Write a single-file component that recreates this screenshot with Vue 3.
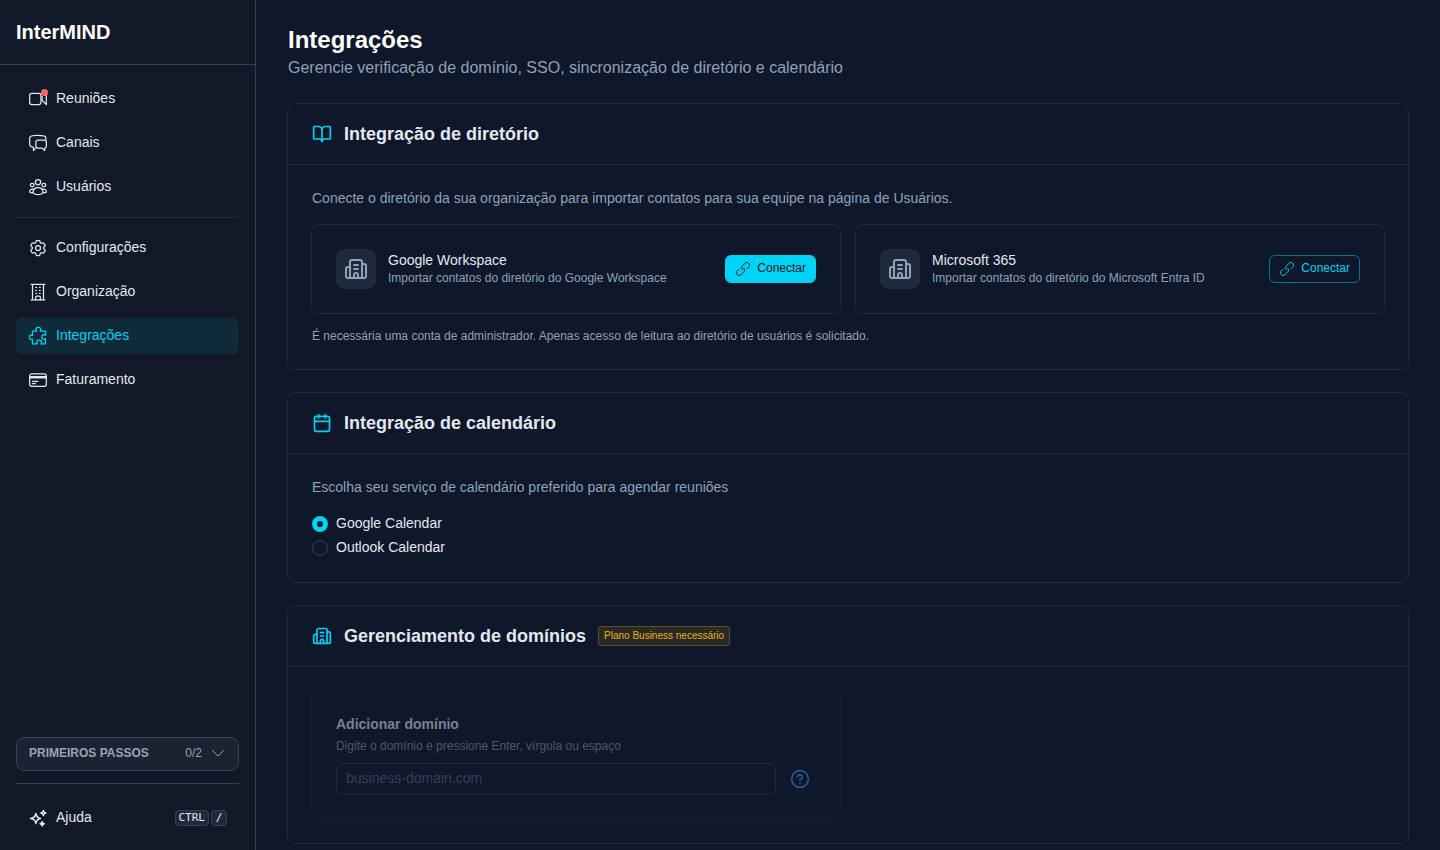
<template>
  <div class="layout">
    <aside class="sidebar">
      <div class="brand">InterMIND</div>
      <nav class="menu">
        <template v-for="(group, i) in menuGroups" :key="i">
          <hr v-if="i > 0" class="menu-divider">
          <a
            v-for="item in group"
            :key="item.id"
            href="#"
            class="menu-item"
            :class="{ active: item.id === current }"
            @click.prevent="current = item.id">
            <span class="menu-icon">
              <svg viewBox="0 0 24 24" width="20" height="20">
                <path v-for="d in item.paths" :key="d" :d="d" />
              </svg>
              <span v-if="item.badge" class="dot"></span>
            </span>
            <span class="menu-label">{{ item.label }}</span>
          </a>
        </template>
      </nav>

      <div class="sidebar-bottom">
        <button type="button" class="steps">
          <span class="steps-title">PRIMEIROS PASSOS</span>
          <span class="steps-count">0/2</span>
          <svg viewBox="0 0 16 16" width="16" height="16"><path d="M2.5 5.5 8 11l5.5-5.5" /></svg>
        </button>
        <hr class="bottom-divider">
        <a href="#" class="menu-item help-item" @click.prevent>
          <span class="menu-icon">
            <svg viewBox="0 0 24 24" width="20" height="20" class="sparkles">
              <path d="M9.500 6.500C10 10.500 11.500 12 15 12.500C11.500 13 10 14.500 9.500 18.500C9 14.500 7.500 13 3 12.500C7.500 12 9 10.500 9.500 6.500Z" />
              <path d="M18.500 3C18.800 5 19.500 5.700 21.500 6C19.500 6.300 18.800 7 18.500 9C18.200 7 17.500 6.300 15.500 6C17.500 5.700 18.200 5 18.500 3Z" />
              <path d="M17 16.500C17.300 18.200 17.900 18.800 19.500 19C17.900 19.200 17.300 19.800 17 21.500C16.700 19.800 16.100 19.200 14.500 19C16.100 18.800 16.700 18.200 17 16.500Z" />
            </svg>
          </span>
          <span class="menu-label">Ajuda</span>
          <span class="keys"><kbd>CTRL</kbd><kbd>/</kbd></span>
        </a>
      </div>
    </aside>

    <main class="content">
      <header class="page-header">
        <h1>Integrações</h1>
        <p>Gerencie verificação de domínio, SSO, sincronização de diretório e calendário</p>
      </header>

      <!-- Diretório -->
      <section class="card">
        <div class="card-header">
          <svg viewBox="0 0 24 24" width="20" height="20">
            <path d="M12 7v14" />
            <path d="M3 18a1 1 0 0 1-1-1V4a1 1 0 0 1 1-1h5a4 4 0 0 1 4 4 4 4 0 0 1 4-4h5a1 1 0 0 1 1 1v13a1 1 0 0 1-1 1h-6a3 3 0 0 0-3 3 3 3 0 0 0-3-3z" />
          </svg>
          <h2>Integração de diretório</h2>
        </div>
        <div class="card-body">
          <p class="lead">Conecte o diretório da sua organização para importar contatos para sua equipe na página de Usuários.</p>
          <div class="grid">
            <div v-for="p in providers" :key="p.name" class="box provider">
              <span class="provider-icon">
                <svg viewBox="0 0 24 24" width="24" height="24">
                  <path v-for="d in buildingPaths" :key="d" :d="d" />
                </svg>
              </span>
              <div class="provider-text">
                <h3>{{ p.name }}</h3>
                <p>{{ p.description }}</p>
              </div>
              <button type="button" class="connect" :class="{ outline: p.outline }">
                <svg viewBox="0 0 24 24" width="16" height="16">
                  <path d="M13.200 10.800a4 4 0 0 1 0 5.600l-4.600 4.600a4 4 0 0 1-5.600-5.600l3-3" />
                  <path d="M10.800 13.200a4 4 0 0 1 0-5.600l4.600-4.600a4 4 0 0 1 5.600 5.600l-3 3" />
                </svg>
                <span>Conectar</span>
              </button>
            </div>
          </div>
          <p class="note">É necessária uma conta de administrador. Apenas acesso de leitura ao diretório de usuários é solicitado.</p>
        </div>
      </section>

      <!-- Calendário -->
      <section class="card">
        <div class="card-header">
          <svg viewBox="0 0 24 24" width="20" height="20">
            <path d="M8 2v4M16 2v4M3 10h18" />
            <rect x="3" y="4" width="18" height="18" rx="2" />
          </svg>
          <h2>Integração de calendário</h2>
        </div>
        <div class="card-body">
          <p class="lead">Escolha seu serviço de calendário preferido para agendar reuniões</p>
          <div class="radios">
            <label v-for="c in calendars" :key="c.id" class="radio">
              <input v-model="calendar" type="radio" name="calendar" :value="c.id">
              <span>{{ c.label }}</span>
            </label>
          </div>
        </div>
      </section>

      <!-- Domínios -->
      <section class="card">
        <div class="card-header">
          <svg viewBox="0 0 24 24" width="20" height="20">
            <path v-for="d in buildingPaths" :key="d" :d="d" />
          </svg>
          <h2>Gerenciamento de domínios</h2>
          <span class="badge">Plano Business necessário</span>
        </div>
        <div class="card-body">
          <div class="grid">
            <div class="box domain">
              <label for="domain">Adicionar domínio</label>
              <p>Digite o domínio e pressione Enter, vírgula ou espaço</p>
              <div class="domain-row">
                <input id="domain" v-model="domain" type="text" placeholder="business-domain.com" disabled>
                <button type="button" class="help" aria-label="Ajuda" disabled>
                  <svg viewBox="0 0 24 24" width="20" height="20">
                    <circle cx="12" cy="12" r="10" />
                    <path d="M9.090 9a3 3 0 0 1 5.830 1c0 2-3 3-3 3M12 17h.01" />
                  </svg>
                </button>
              </div>
            </div>
          </div>
        </div>
      </section>
    </main>
  </div>
</template>

<script setup>
import { ref } from 'vue';

const current = ref('integracoes');
const calendar = ref('google');
const domain = ref('');

const menuGroups = [
  [
    {
      id: 'reunioes',
      label: 'Reuniões',
      badge: true,
      paths: [
        'M4.500 5.300h8.500a2.500 2.500 0 0 1 2.500 2.500v8.500a2.500 2.500 0 0 1-2.500 2.500H4.500a2.500 2.500 0 0 1-2.500-2.500v-8.500A2.500 2.500 0 0 1 4.500 5.300z',
        'M17 9v4.500l5 5.200V7',
      ],
    },
    {
      id: 'canais',
      label: 'Canais',
      paths: [
        'M21.500 8V6.500a3 3 0 0 0-2.600-3C14.500 2.600 9.500 2.600 5 3.300a3.500 3.500 0 0 0-3 3.400v6.600A3.500 3.500 0 0 0 5.200 16.800h1.300V21L9 18.500',
        'M12 8.500h7.500a2.500 2.500 0 0 1 2.500 2.500v5a2.500 2.500 0 0 1-2 2.400V21l-3-2.800h-5a2.500 2.500 0 0 1-2.500-2.500V11a2.500 2.500 0 0 1 2.500-2.500z',
      ],
    },
    {
      id: 'usuarios',
      label: 'Usuários',
      paths: [
        'M12 3a3 3 0 1 1 0 6.400A3 3 0 0 1 12 3z',
        'M5 7.500a2.200 2.200 0 1 1 0 4.400 2.200 2.200 0 0 1 0-4.400zM19 7.500a2.200 2.200 0 1 1 0 4.400 2.200 2.200 0 0 1 0-4.400z',
        'M6 19c0-4 2.500-6.200 6-6.200s6 2.200 6 6.200c-3 3-9 3-12 0z',
        'M7 14.800c-2.800-1-5 .7-5 3.200 1 .9 2.700 1.100 4 .8M17 14.800c2.800-1 5 .7 5 3.200-1 .9-2.700 1.100-4 .8',
      ],
    },
  ],
  [
    {
      id: 'configuracoes',
      label: 'Configurações',
      paths: [
        'M9.594 3.940c.09-.542.56-.94 1.110-.94h2.593c.55 0 1.020.398 1.110.94l.213 1.281c.063.374.313.686.645.870.074.04.147.083.22.127.325.196.72.257 1.075.124l1.217-.456a1.125 1.125 0 0 1 1.370.49l1.296 2.247a1.125 1.125 0 0 1-.26 1.431l-1.003.827c-.293.241-.438.613-.43.992a7.723 7.723 0 0 1 0 .255c-.008.378.137.750.430.991l1.004.827c.424.350.534.955.260 1.430l-1.298 2.247a1.125 1.125 0 0 1-1.369.491l-1.217-.456c-.355-.133-.750-.072-1.076.124a6.470 6.470 0 0 1-.220.128c-.331.183-.581.495-.644.869l-.213 1.281c-.09.543-.560.940-1.110.940h-2.594c-.550 0-1.019-.398-1.110-.940l-.213-1.281c-.062-.374-.312-.686-.644-.870a6.520 6.520 0 0 1-.220-.127c-.325-.196-.720-.257-1.076-.124l-1.217.456a1.125 1.125 0 0 1-1.369-.490l-1.297-2.247a1.125 1.125 0 0 1 .260-1.431l1.004-.827c.292-.240.437-.613.430-.991a6.932 6.932 0 0 1 0-.255c.007-.380-.138-.751-.430-.992l-1.004-.827a1.125 1.125 0 0 1-.260-1.430l1.297-2.247a1.125 1.125 0 0 1 1.370-.491l1.216.456c.356.133.751.072 1.076-.124.072-.044.146-.086.220-.128.332-.183.582-.495.644-.869l.214-1.280z',
        'M15 12a3 3 0 1 1-6 0 3 3 0 0 1 6 0z',
      ],
    },
    {
      id: 'organizacao',
      label: 'Organização',
      paths: [
        'M3.800 2.800h16.400M3.800 21.300h16.400M5.400 2.800v18.500M18.600 2.800v18.500',
        'M9.300 6.500h1M13.700 6.500h1M9.300 10h1M13.700 10h1M9.300 13.500h1M13.700 13.500h1',
        'M9.200 21.300v-3a1.500 1.500 0 0 1 1.500-1.500h2.600a1.500 1.500 0 0 1 1.500 1.500v3',
      ],
    },
    {
      id: 'integracoes',
      label: 'Integrações',
      paths: [
        'M5.300 6h5C9.600 5.100 9.400 4.600 9.400 4.100a3 2.500 0 0 1 6 0c0 .5-.2 1-.9 1.900h6.500v5.300c-.9-.7-1.400-.9-1.900-.9a2.500 2.800 0 0 0 0 5.600c.5 0 1-.2 1.900-.9v6.200h-5.500c.7-.9.9-1.400.9-1.900a3 2.500 0 0 0-6 0c0 .5.2 1 .9 1.900H5.300v-5.600c-.5.400-.9.500-1.300.5a2.300 2.700 0 0 1 0-5.400c.4 0 .8.100 1.300.5z',
      ],
    },
    {
      id: 'faturamento',
      label: 'Faturamento',
      paths: [
        'M4.500 4.500h15a2.500 2.500 0 0 1 2.500 2.500v10a2.500 2.500 0 0 1-2.500 2.500h-15a2.500 2.500 0 0 1-2.500-2.500v-10a2.500 2.500 0 0 1 2.500-2.500z',
        'M2 8h20M2 9.500h20M5.300 13.500h6.500M5.300 16.200h3.500',
      ],
    },
  ],
];

const buildingPaths = [
  'M10 12h4M10 8h4',
  'M14 21v-3a2 2 0 0 0-4 0v3',
  'M6 10H4a2 2 0 0 0-2 2v7a2 2 0 0 0 2 2h16a2 2 0 0 0 2-2V9a2 2 0 0 0-2-2h-2',
  'M6 21V5a2 2 0 0 1 2-2h8a2 2 0 0 1 2 2v16',
];

const providers = [
  { name: 'Google Workspace', description: 'Importar contatos do diretório do Google Workspace', outline: false },
  { name: 'Microsoft 365', description: 'Importar contatos do diretório do Microsoft Entra ID', outline: true },
];

const calendars = [
  { id: 'google', label: 'Google Calendar' },
  { id: 'outlook', label: 'Outlook Calendar' },
];
</script>

<style>
body {
  margin: 0;
  background: #0f172a;
}
</style>

<style scoped>
.layout {
  display: flex;
  height: 100vh;
  overflow: hidden;
  background: #0f172a;
  color: #e2e8f0;
  font-family: "Liberation Sans", Arial, sans-serif;
  font-size: 14px;
  line-height: 20px;
}
.layout * {
  box-sizing: border-box;
}
svg {
  display: block;
  flex-shrink: 0;
  fill: none;
  stroke: currentColor;
  stroke-width: 2;
  stroke-linecap: round;
  stroke-linejoin: round;
}
button, input {
  font-family: inherit;
}
h1, h2, h3, p {
  margin: 0;
}

/* sidebar */
.sidebar {
  display: flex;
  flex-direction: column;
  width: 256px;
  flex-shrink: 0;
  background: #111827;
  border-right: 1px solid #334155;
}
.brand {
  height: 65px;
  padding: 0 16px;
  border-bottom: 1px solid #334155;
  color: #fff;
  font-size: 20px;
  font-weight: 700;
  line-height: 64px;
}
.menu {
  display: flex;
  flex-direction: column;
  gap: 8px;
  padding: 16px;
}
.menu-divider {
  width: 100%;
  margin: 4px 0;
  border: 0;
  border-top: 1px solid #1e293b;
}
.menu-item {
  display: flex;
  align-items: center;
  gap: 8px;
  height: 36px;
  padding: 0 12px;
  border-radius: 6px;
  color: #e2e8f0;
  text-decoration: none;
}
.menu-item.active {
  background: #0f2b3a;
  color: #00d3f3;
}
.menu-label,
.connect span {
  padding-bottom: 2px;
}
.menu-icon {
  position: relative;
}
.menu-icon svg {
  stroke-width: 1.5;
}
.menu-icon .sparkles {
  stroke-width: 1.8;
}
.dot {
  position: absolute;
  top: 0;
  right: 0;
  width: 7px;
  height: 7px;
  border-radius: 50%;
  background: #ff6467;
}
.sidebar-bottom {
  margin-top: auto;
  padding: 0 16px 14px;
}
.steps {
  display: flex;
  align-items: center;
  width: 100%;
  height: 34px;
  padding: 0 12px 2px;
  border: 1px solid #334155;
  border-radius: 8px;
  background: #1a2332;
  color: #94a3b8;
  font-size: 12px;
}
.steps-title {
  font-weight: 700;
}
.steps-count {
  margin-left: auto;
  margin-right: 8px;
}
.steps svg {
  stroke-width: 1;
}
.bottom-divider {
  margin: 12px 0 16px;
  border: 0;
  border-top: 1px solid #334155;
}
.keys {
  display: flex;
  gap: 2px;
  margin-left: auto;
}
kbd {
  min-width: 16px;
  height: 16px;
  padding: 0 3px;
  border: 1px solid #334155;
  border-radius: 4px;
  background: #1e293b;
  font-family: "DejaVu Sans Mono", monospace;
  font-size: 11px;
  line-height: 14px;
  text-align: center;
}

/* content */
.content {
  display: flex;
  flex: 1;
  flex-direction: column;
  gap: 22px;
  min-width: 0;
  padding: 24px 31px;
  overflow: hidden;
}
.page-header {
  padding: 0 1px 1px;
}
.page-header h1 {
  color: #fff;
  font-size: 24px;
  line-height: 32px;
}
.page-header p {
  color: #90a1b9;
  font-size: 16px;
  line-height: 24px;
}
.card {
  flex-shrink: 0;
  border: 1px solid #1e293b;
  border-radius: 8px;
}
.card-header {
  display: flex;
  align-items: center;
  gap: 12px;
  height: 61px;
  padding: 0 24px;
  border-bottom: 1px solid #1e293b;
}
.card-header > svg {
  color: #00d3f3;
}
.card-header h2 {
  font-size: 18px;
  line-height: 28px;
}
.badge {
  height: 20px;
  padding: 0 5px;
  border: 1px solid #645112;
  border-radius: 3px;
  background: #272a2a;
  color: #f0b100;
  font-size: 10px;
  line-height: 18px;
}
.card-body {
  padding: 23px;
}
.lead {
  margin: 0 1px 16px;
  color: #90a1b9;
}
.grid {
  display: grid;
  grid-template-columns: 1fr 1fr;
  gap: 14px;
}
.box {
  padding: 24px;
  border: 1px solid #1e293b;
  border-radius: 8px;
}
.provider {
  display: flex;
  gap: 12px;
  height: 90px;
}
.provider-icon {
  display: flex;
  align-items: center;
  justify-content: center;
  width: 40px;
  height: 40px;
  border-radius: 8px;
  background: #1e293b;
  color: #90a1b9;
}
.provider-text {
  flex: 1;
  padding-top: 1px;
}
.provider-text h3 {
  font-size: 14px;
  font-weight: 400;
}
.provider-text p {
  color: #90a1b9;
  font-size: 12px;
  line-height: 16px;
}
.connect {
  display: flex;
  align-items: center;
  gap: 6px;
  height: 28px;
  margin-top: 6px;
  padding: 0 9px;
  border: 1px solid #00d3f3;
  border-radius: 6px;
  background: #00d3f3;
  color: #0f172a;
  font-size: 12px;
}
.connect svg {
  stroke-width: 1.4;
}
.connect.outline {
  border-color: #06798f;
  background: transparent;
  color: #00d3f3;
}
.note {
  margin: 14px 1px 2px;
  color: #90a1b9;
  font-size: 12px;
  line-height: 16px;
}
.radios {
  display: flex;
  flex-direction: column;
  gap: 4px;
  margin: 0 1px 2px;
}
.radio {
  display: flex;
  align-items: center;
  gap: 8px;
}
.radio input {
  appearance: none;
  width: 16px;
  height: 16px;
  margin: 2px 0 0;
  border: 1px solid #334155;
  border-radius: 50%;
}
.radio input:checked {
  border: 5px solid #00d3f3;
}
.domain {
  border-color: #162033;
}
.domain label {
  display: block;
  color: #788190;
  font-weight: 700;
  line-height: 18px;
}
.domain p {
  margin-top: 4px;
  color: #4c586d;
  font-size: 12px;
  line-height: 18px;
}
.domain-row {
  display: flex;
  align-items: center;
  gap: 14px;
  margin-top: 8px;
}
.domain-row input {
  flex: 1;
  min-width: 0;
  height: 32px;
  padding: 0 9px 2px;
  border: 1px solid #1d293c;
  border-radius: 6px;
  background: transparent;
  font-size: 14px;
}
.domain-row input::placeholder {
  color: #33405a;
}
.help {
  margin-right: 6px;
  padding: 0;
  border: 0;
  background: none;
  color: #2b5796;
}
</style>
